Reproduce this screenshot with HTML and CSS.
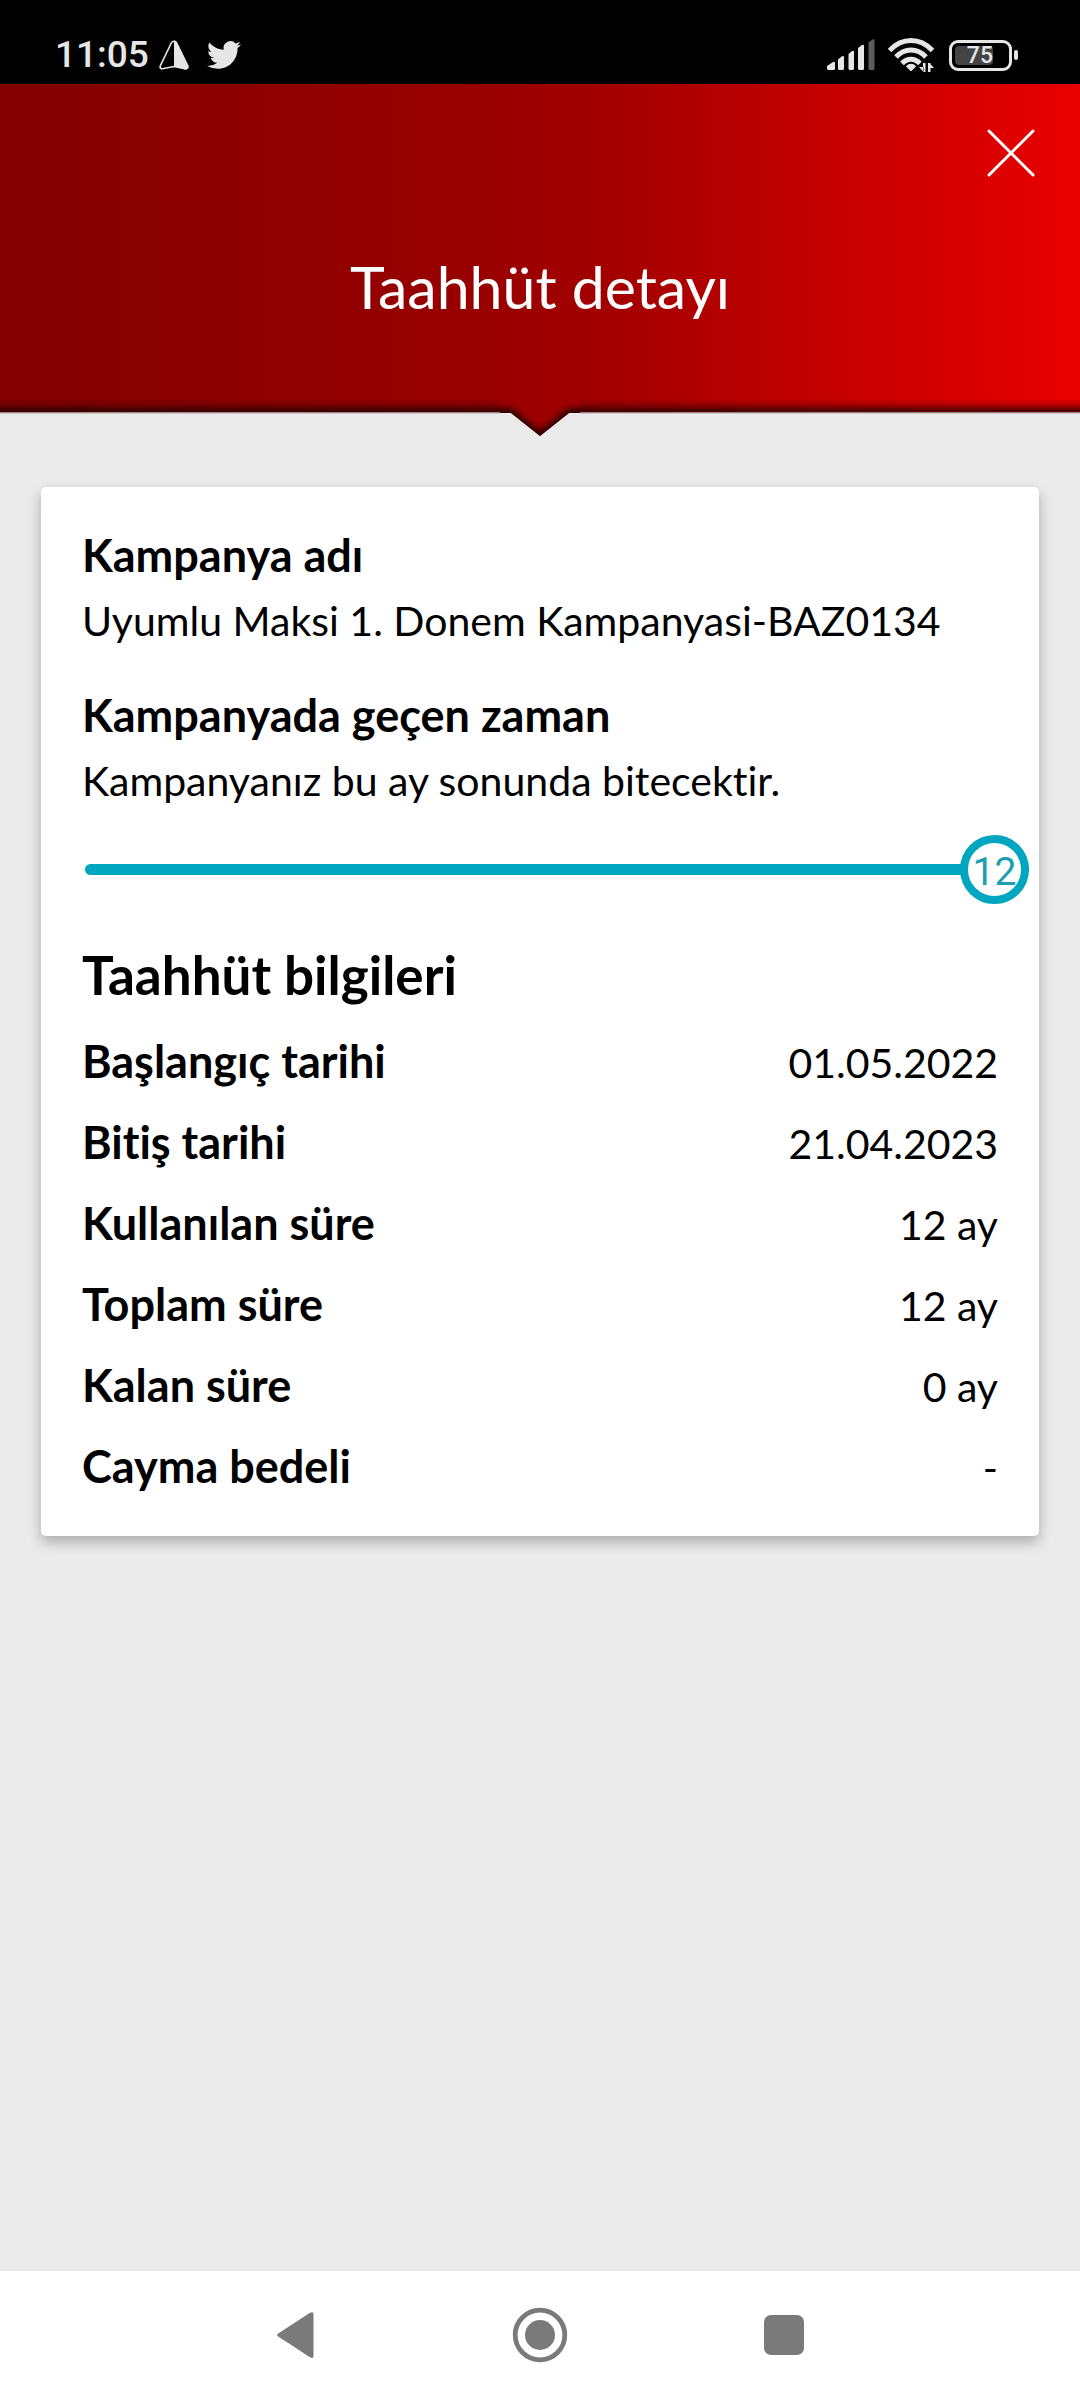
FILE: index.html
```html
<!DOCTYPE html>
<html lang="tr">
<head>
<meta charset="utf-8">
<meta name="viewport" content="width=device-width, initial-scale=1">
<title>Taahhüt detayı</title>
<link rel="stylesheet" href="styles.css">
</head>
<body>
<div class="statusbar">
  <span class="statusbar-time">11:05</span>
  <svg class="icon-prism" width="30" height="30" viewBox="0 0 30 30" aria-hidden="true">
    <path d="M15 1.2c1.200 0 2 .6 2.600 1.800l11 22.500c1 2.200-.4 3.600-2.600 3.300L15 26.500 3.500 28.800C1.600 29 .6 27.500 1.400 25.600L12.300 3C12.900 1.800 13.800 1.200 15 1.200z" fill="none" stroke="#e6e6e6" stroke-width="1.600"/>
    <path d="M15 .6c1.500 0 2.500.8 3 2l11 22.600c1 2.600-.4 4.500-3 4.200l-11-3z" fill="#e6e6e6"/>
  </svg>
  <svg class="icon-bird" width="34" height="34" viewBox="0 0 24 24" aria-hidden="true">
    <path fill="#e6e6e6" d="M23.953 4.570a10 10 0 01-2.825.775 4.958 4.958 0 002.163-2.723c-.951.555-2.005.959-3.127 1.184a4.920 4.920 0 00-8.384 4.482C7.690 8.095 4.067 6.130 1.640 3.162a4.822 4.822 0 00-.666 2.475c0 1.710.87 3.213 2.188 4.096a4.904 4.904 0 01-2.228-.616v.06a4.923 4.923 0 003.946 4.827 4.996 4.996 0 01-2.212.085 4.936 4.936 0 004.604 3.417 9.867 9.867 0 01-6.102 2.105c-.39 0-.779-.023-1.170-.067a13.995 13.995 0 007.557 2.209c9.053 0 13.998-7.496 13.998-13.985 0-.21 0-.42-.015-.63A9.935 9.935 0 0024 4.590z"/>
  </svg>
  <span class="statusbar-space"></span>
  <svg class="icon-signal" width="48" height="32" viewBox="0 0 48 32" aria-hidden="true">
    <g fill="#e6e6e6">
      <path d="M0 27l6-4q2-1 2 1v5.500q0 1.500-1.500 1.500h-5Q0 31 0 29.500z"/>
      <path d="M11 20.500l4-3.200q2-1 2 1V29.500q0 1.500-1.500 1.500h-3Q11 31 11 29.500z"/>
      <path d="M21.500 15l3.500-3q2-1 2 1V29.500q0 1.500-1.500 1.500H23q-1.500 0-1.500-1.500z"/>
      <path d="M31 9l4-3q2-1 2 1V29.500q0 1.500-1.500 1.500h-3Q31 31 31 29.500z"/>
    </g>
    <path fill="#5c5c5c" d="M41.500 3.500l4-3q2-1 2 1V29.500q0 1.500-1.500 1.500H43q-1.500 0-1.500-1.500z"/>
  </svg>
  <svg class="icon-wifi" width="46" height="36" viewBox="0 0 46 36" aria-hidden="true">
    <g fill="none" stroke="#e6e6e6" stroke-width="5">
      <path d="M1.500 13.500Q11 3.500 23 3.500T44.500 13.500"/>
      <path d="M8 20Q14.500 13 23 13T38 20"/>
      <path d="M14 26.500Q18 22.200 23 22.200T32 26.500"/>
    </g>
    <path fill="#e6e6e6" d="M17.800 29.200Q23 24.500 28.200 29.200L23.800 33.700Q23 34.400 22.200 33.700z"/>
    <path fill="#000" d="M34 24h12v12H30v-6z"/>
    <path fill="#e6e6e6" d="M35 26v9h2.500V26zM35.500 35L31 30h4.500zM40 35V26h2.500v9zM41.500 26l4.500 5h-4.500z"/>
  </svg>
  <span class="battery">
    <span class="battery-body"><span class="battery-level">75</span></span>
    <span class="battery-nub"></span>
  </span>
</div>

<header class="header">
  <button class="close" type="button" aria-label="Kapat">
    <svg width="48" height="48" viewBox="0 0 48 48" aria-hidden="true">
      <path d="M2 2l44 44M46 2L2 46" stroke="#fff" stroke-width="3" stroke-linecap="round"/>
    </svg>
  </button>
  <h1 class="title">Taahhüt detayı</h1>
  <div class="edge" aria-hidden="true">
    <span class="edge-side"></span>
    <svg class="edge-notch" width="80" height="44" viewBox="0 0 80 44">
      <defs>
        <clipPath id="notch"><path d="M0 0H80V19H69L40 42 11 19H0z"/></clipPath>
        <filter id="soft" x="-20%" y="-50%" width="140%" height="200%"><feGaussianBlur stdDeviation="3"/></filter>
        <linearGradient id="red"><stop offset="0" stop-color="#9b0000"/><stop offset="1" stop-color="#a00000"/></linearGradient>
      </defs>
      <g clip-path="url(#notch)">
        <path d="M0 17H80V44H0z" fill="url(#red)"/>
        <path d="M-20 19H10L40 43 70 19H100" fill="none" stroke="#200000" stroke-width="9" filter="url(#soft)"/>
      </g>
    </svg>
    <span class="edge-side"></span>
  </div>
</header>

<main class="content">
  <section class="card">
    <div class="block">
      <h2 class="label">Kampanya adı</h2>
      <p class="text">Uyumlu Maksi 1. Donem Kampanyasi-BAZ0134</p>
    </div>
    <div class="block">
      <h2 class="label" id="elapsed">Kampanyada geçen zaman</h2>
      <p class="text">Kampanyanız bu ay sonunda bitecektir.</p>
    </div>
    <div class="progress">
      <input class="progress-range" id="months" type="range" min="0" max="12" value="12" aria-labelledby="elapsed">
      <output class="progress-value" for="months">12</output>
    </div>
    <h2 class="section-title">Taahhüt bilgileri</h2>
    <table class="details">
      <tr><th scope="row">Başlangıç tarihi</th><td>01.05.2022</td></tr>
      <tr><th scope="row">Bitiş tarihi</th><td>21.04.2023</td></tr>
      <tr><th scope="row">Kullanılan süre</th><td>12 ay</td></tr>
      <tr><th scope="row">Toplam süre</th><td>12 ay</td></tr>
      <tr><th scope="row">Kalan süre</th><td>0 ay</td></tr>
      <tr><th scope="row">Cayma bedeli</th><td>-</td></tr>
    </table>
  </section>
</main>

<nav class="navbar" aria-label="Sistem">
  <button class="navbar-button" type="button" aria-label="Geri">
    <svg width="64" height="64" viewBox="0 0 64 64" aria-hidden="true"><path d="M14.200 30.500 46 9.800Q49.500 8 49.500 11V53Q49.500 56 46 54.200L14.200 33.500Q12 32 14.200 30.500z" fill="#7a7a7a"/></svg>
  </button>
  <button class="navbar-button" type="button" aria-label="Ana ekran">
    <svg width="64" height="64" viewBox="0 0 64 64" aria-hidden="true"><circle cx="32" cy="32" r="24.800" fill="none" stroke="#7a7a7a" stroke-width="4.800"/><circle cx="32" cy="32" r="15" fill="#7a7a7a"/></svg>
  </button>
  <button class="navbar-button" type="button" aria-label="Son uygulamalar">
    <svg width="64" height="64" viewBox="0 0 64 64" aria-hidden="true"><rect x="12" y="12" width="40" height="40" rx="7" fill="#7a7a7a"/></svg>
  </button>
</nav>
</body>
</html>
```

FILE: styles.css
```css
* { box-sizing: border-box; }

body {
  margin: 0;
  min-height: 100vh;
  display: flex;
  flex-direction: column;
  background: #ebebeb;
  color: #000;
  font-family: Lato, "Noto Sans", sans-serif;
  font-variant-ligatures: none;
}

h1, h2, p { margin: 0; }

button {
  display: flex;
  align-items: center;
  justify-content: center;
  padding: 0;
  border: 0;
  background: none;
}

/* Status bar */
.statusbar {
  display: flex;
  align-items: center;
  height: 84px;
  padding: 26px 62px 0 55px;
  background: #000;
  color: #e6e6e6;
  font-family: Roboto, sans-serif;
  font-weight: 500;
}
.statusbar-time { font-size: 37px; line-height: 40px; }
.statusbar-space { flex: 1; }
.icon-prism { margin-left: 10px; }
.icon-bird { margin-left: 18px; }
.icon-wifi { margin-left: 13px; }
.battery { display: flex; align-items: center; gap: 2px; margin-left: 15px; }
.battery-body {
  width: 63px;
  height: 31px;
  padding: 3px;
  border: 3px solid #e6e6e6;
  border-radius: 9px;
}
.battery-level {
  display: block;
  width: 38px;
  height: 19px;
  border-radius: 4px;
  background: #444;
  font-size: 23px;
  line-height: 20px;
  text-align: right;
}
.battery-nub { width: 4px; height: 10px; border-radius: 2px; background: #e6e6e6; }

/* Header */
.header {
  position: relative;
  display: flex;
  flex-direction: column;
  padding: 21px 21px 90px;
  background: linear-gradient(90deg, #820000 0%, #990000 45%, #a40000 57%, #e60000 98%);
  color: #fff;
}
.close { align-self: flex-end; width: 96px; height: 96px; }
.title {
  margin-top: 51px;
  font-size: 59px;
  font-weight: 400;
  line-height: 70px;
  text-align: center;
}
.edge {
  position: absolute;
  left: 0;
  right: 0;
  bottom: -26px;
  display: flex;
  align-items: flex-start;
}
.edge-side {
  flex: 1;
  height: 20px;
  background: linear-gradient(transparent 5px, rgba(32, 0, 0, .14) 9px, rgba(32, 0, 0, .4) 13px, rgba(32, 0, 0, .8) 17px, rgba(60, 0, 0, .6) 18px, transparent 20px);
}

/* Card */
.content { flex: 1; padding: 75px 41px; }
.card {
  padding: 35px 41px 28px;
  border-radius: 5px;
  background: #fff;
  box-shadow: 0 6px 14px rgba(0, 0, 0, .28);
}
.block + .block { margin-top: 28px; }
.label { font-size: 45px; font-weight: 700; line-height: 66px; }
.text { font-size: 41px; line-height: 66px; }

.progress { position: relative; margin: 21px -31px 0 3px; }
.progress-range {
  display: block;
  width: 100%;
  height: 69px;
  margin: 0;
  background: none;
  appearance: none;
}
.progress-range::-webkit-slider-runnable-track {
  height: 11px;
  border-radius: 6px;
  background: #00a5bf;
}
.progress-range::-webkit-slider-thumb {
  width: 69px;
  height: 69px;
  margin-top: -29px;
  border: 8px solid #00a5bf;
  border-radius: 50%;
  background: #fff;
  appearance: none;
}
.progress-value {
  position: absolute;
  top: 0;
  right: 0;
  width: 69px;
  color: #1aa0b4;
  font-family: Roboto, sans-serif;
  font-size: 39px;
  line-height: 74px;
  text-align: center;
  pointer-events: none;
}

.section-title { margin-top: 38px; font-size: 53px; font-weight: 700; line-height: 66px; }
.details { width: 100%; margin-top: 14px; border-collapse: collapse; line-height: 79px; }
.details tr { height: 81px; }
.details th,
.details td { padding: 0; vertical-align: baseline; }
.details th { font-size: 45px; font-weight: 700; text-align: left; }
.details td { font-size: 41px; text-align: right; }

/* System navigation */
.navbar {
  display: flex;
  align-items: center;
  justify-content: center;
  gap: 180px;
  height: 130px;
  padding-bottom: 1px;
  border-top: 1px solid #e2e2e2;
  background: #fff;
}
.navbar-button { width: 64px; height: 64px; }
```
